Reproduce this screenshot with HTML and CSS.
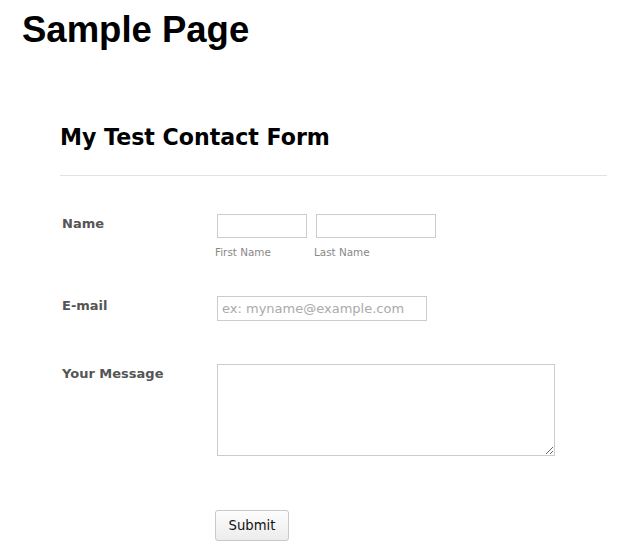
FILE: index.html
```html
<!DOCTYPE html>
<html lang="en">
<head>
<meta charset="utf-8">
<title>Sample Page</title>
<link rel="stylesheet" href="styles.css">
</head>
<body>
<h1 class="page-title">Sample Page</h1>
<form class="contact-form">
  <h2 class="form-title">My Test Contact Form</h2>
  <ul class="form-rows">
    <li class="form-row row-name">
      <label class="field-label">Name</label>
      <div class="field-inputs">
        <span class="sub-field">
          <input class="text-input input-first" type="text">
          <span class="sub-label">First Name</span>
        </span>
        <span class="sub-field">
          <input class="text-input input-last" type="text">
          <span class="sub-label">Last Name</span>
        </span>
      </div>
    </li>
    <li class="form-row row-email">
      <label class="field-label">E-mail</label>
      <div class="field-inputs">
        <input class="text-input input-email" type="email" placeholder="ex: myname@example.com">
      </div>
    </li>
    <li class="form-row row-message">
      <label class="field-label">Your Message</label>
      <div class="field-inputs">
        <textarea class="text-area"></textarea>
      </div>
    </li>
    <li class="form-row row-submit">
      <button class="submit-btn" type="button">Submit</button>
    </li>
  </ul>
</form>
</body>
</html>
```

FILE: styles.css
```css
html, body {
  margin: 0;
  padding: 0;
  background: #ffffff;
}

body {
  font-family: "DejaVu Sans", "Liberation Sans", sans-serif;
  color: #000;
}

.page-title {
  margin: 0;
  padding: 10px 0 0 22px;
  font-family: "Liberation Sans", Arial, sans-serif;
  font-weight: bold;
  font-size: 36.5px;
  line-height: 40px;
  color: #000;
}

.contact-form {
  margin: 0 20px 0 60px;
}

.form-title {
  margin: 74px 0 0 0;
  padding: 0 0 25px 0;
  font-family: "DejaVu Sans", sans-serif;
  font-weight: bold;
  font-size: 22.1px;
  line-height: 26px;
  color: #000;
  border-bottom: 1px solid #e2e2e2;
}

.form-rows {
  list-style: none;
  margin: 0;
  padding: 0;
}

.form-row {
  display: flex;
  align-items: flex-start;
}

.row-name { margin-top: 38px; }
.row-email { margin-top: 38px; }
.row-message { margin-top: 43px; }
.row-submit { margin-top: 54px; padding-left: 155px; }

.field-label {
  width: 157px;
  flex: none;
  box-sizing: border-box;
  padding: 2px 0 0 2px;
  font-weight: bold;
  font-size: 13px;
  line-height: 16px;
  color: #555555;
}

.field-inputs {
  display: flex;
  gap: 9px;
}

.sub-field {
  display: flex;
  flex-direction: column;
  gap: 8px;
}

.text-input {
  box-sizing: border-box;
  height: 24px;
  margin: 0;
  padding: 2px 4px;
  border: 1px solid #cccccc;
  border-radius: 0;
  background: #fff;
  font-family: "DejaVu Sans", sans-serif;
  font-size: 13px;
  color: #333;
  outline: none;
}

.input-first { width: 90px; }
.input-last { width: 120px; }
.input-email { width: 210px; height: 25px; }

.text-input::placeholder {
  color: #aaaaaa;
  opacity: 1;
}

.sub-label {
  margin-left: -2px;
  font-size: 10.4px;
  line-height: 12px;
  color: #888888;
}

.text-area {
  box-sizing: border-box;
  width: 338px;
  height: 92px;
  margin: 0;
  border: 1px solid #cccccc;
  border-radius: 0;
  font-family: "DejaVu Sans", sans-serif;
  font-size: 13px;
  resize: both;
  display: block;
}

.submit-btn {
  box-sizing: border-box;
  width: 74px;
  height: 31px;
  margin: 0;
  padding: 0;
  border: 1px solid #c8c8c8;
  border-radius: 3px;
  background: linear-gradient(#fdfdfd, #ececec);
  font-family: "DejaVu Sans", sans-serif;
  font-size: 13.2px;
  color: #111;
}
```
